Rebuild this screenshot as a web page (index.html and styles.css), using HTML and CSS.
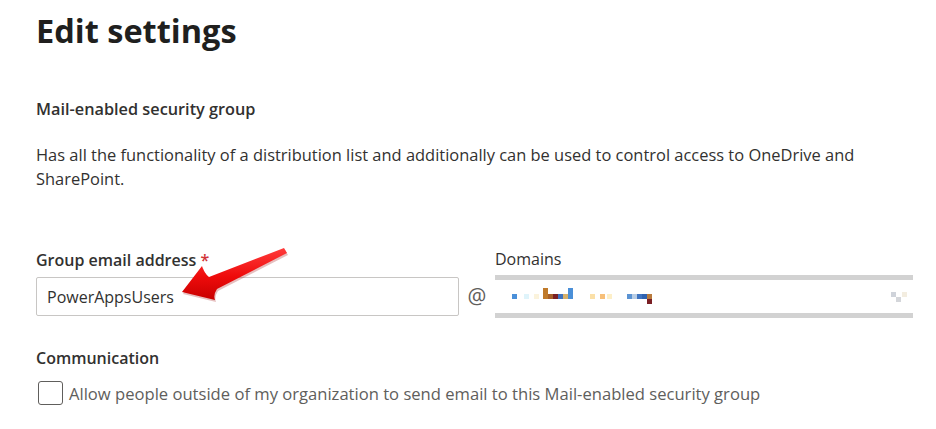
FILE: index.html
```html
<!DOCTYPE html>
<html>
  <head>
    <meta charset="UTF-8">
    <title>Edit settings</title>
    <link rel="stylesheet" href="styles.css">
  </head>
  <body>
    <main class="settings">
      <h1 class="settings__title">Edit settings</h1>

      <section class="settings__type">
        <h2 class="settings__type-name">Mail-enabled security group</h2>
        <p class="settings__type-desc">Has all the functionality of a distribution list and additionally can be used to control access to OneDrive and SharePoint.</p>
      </section>

      <section class="address">
        <div class="address__field">
          <label class="field-label">Group email address <span class="field-label__req">*</span></label>
          <input class="address__input" type="text" value="PowerAppsUsers">
        </div>
        <span class="address__at">@</span>
        <div class="address__domain">
          <label class="field-label field-label--plain">Domains</label>
          <div class="domain-select">
            <svg class="domain-select__blur" width="150" height="18" viewBox="0 0 150 18">
              <rect x="0" y="6" width="5" height="5" fill="#4a90d9"/>
              <rect x="12" y="6" width="5" height="5" fill="#dff4fb"/>
              <rect x="22" y="6" width="5" height="5" fill="#fbf3dc"/>
              <rect x="31" y="0" width="5" height="11" fill="#c07a2a"/>
              <rect x="36" y="6" width="5" height="5" fill="#a8602a"/>
              <rect x="41" y="6" width="5" height="5" fill="#7a1f24"/>
              <rect x="46" y="6" width="5" height="5" fill="#3d73c0"/>
              <rect x="51" y="6" width="5" height="5" fill="#d6b06a"/>
              <rect x="56" y="0" width="5" height="11" fill="#4a8fd8"/>
              <rect x="78" y="6" width="5" height="5" fill="#fbe0a8"/>
              <rect x="88" y="6" width="5" height="5" fill="#f7bf78"/>
              <rect x="95" y="6" width="5" height="5" fill="#fdefc8"/>
              <rect x="115" y="6" width="5" height="5" fill="#5b93d3"/>
              <rect x="120" y="6" width="5" height="5" fill="#b9cde4"/>
              <rect x="125" y="6" width="5" height="5" fill="#3f74c1"/>
              <rect x="130" y="6" width="5" height="5" fill="#2f63b0"/>
              <rect x="135" y="6" width="5" height="5" fill="#b87a3c"/>
              <rect x="135" y="11" width="5" height="5" fill="#7a1f24"/>
            </svg>
            <svg class="domain-select__chevron" width="16" height="10" viewBox="0 0 16 10">
              <rect x="0" y="0" width="5" height="5" fill="#cfd3da"/>
              <rect x="11" y="0" width="5" height="5" fill="#f3ede0"/>
              <rect x="5" y="5" width="5" height="5" fill="#d4d6da"/>
            </svg>
          </div>
        </div>
      </section>

      <section class="communication">
        <h3 class="communication__title">Communication</h3>
        <label class="check">
          <span class="check__box"></span>
          <span class="check__text">Allow people outside of my organization to send email to this Mail-enabled security group</span>
        </label>
      </section>
    </main>

    <svg class="pointer" width="936" height="429" viewBox="0 0 936 429">
      <defs>
        <linearGradient id="arrowFill" x1="0" y1="0" x2="0" y2="1">
          <stop offset="0" stop-color="#ff3b3b"/>
          <stop offset="0.55" stop-color="#ee0b0b"/>
          <stop offset="1" stop-color="#c80000"/>
        </linearGradient>
      </defs>
      <path d="M182 292 L202 266 Q204 273 209 277 L284 248 L287 253 L217 289 Q213 295 215 300 Z" fill="#9a0000" opacity="0.25" transform="translate(1 2)"/>
      <path d="M182 292 L202 266 Q204 273 209 277 L284 248 L287 253 L217 289 Q213 295 215 300 Z" fill="url(#arrowFill)"/>
    </svg>
  </body>
</html>
```

FILE: styles.css
```css
* {
  box-sizing: border-box;
}
body {
  margin: 0;
  background-color: #fff;
  font-family: "Open Sans", "Noto Sans", sans-serif;
  color: #323130;
  position: relative;
}

.settings {
  padding: 10px 0 0 36px;
}
.settings__title {
  font-size: 32.5px;
  font-weight: 700;
  color: #201f1e;
  margin: 0;
  line-height: 42px;
}

.settings__type {
  margin-top: 46px;
}
.settings__type-name {
  font-size: 16.3px;
  font-weight: 600;
  margin: 0;
  line-height: 22px;
}
.settings__type-desc {
  font-size: 16.45px;
  line-height: 24px;
  margin: 23px 0 0;
  max-width: 850px;
}

.address {
  display: flex;
  align-items: flex-end;
  margin-top: 57px;
}
.address__field {
  width: 423px;
}
.field-label {
  display: block;
  font-size: 16px;
  font-weight: 600;
  line-height: 22px;
  margin-bottom: 6px;
}
.field-label--plain {
  font-weight: 400;
  margin-bottom: 5px;
}
.field-label__req {
  color: #d13438;
}
.address__input {
  width: 100%;
  height: 39px;
  border: solid 1px #c8c6c4;
  border-radius: 2px;
  padding: 0 10px;
  font-family: inherit;
  font-size: 16px;
  color: #323130;
  outline: none;
}
.address__at {
  width: 36px;
  text-align: center;
  font-size: 21px;
  line-height: 39px;
  color: #605e5c;
}
.address__domain {
  width: 418px;
  margin-bottom: -2px;
}
.domain-select {
  height: 43px;
  border-top: solid 5px #d2d2d2;
  border-bottom: solid 5px #d2d2d2;
  display: flex;
  align-items: center;
  justify-content: space-between;
  padding: 0 6px 0 17px;
}

.communication {
  margin-top: 31px;
}
.communication__title {
  font-size: 16px;
  font-weight: 600;
  margin: 0;
  line-height: 22px;
}
.check {
  display: flex;
  align-items: center;
  margin-top: 12px;
}
.check__box {
  width: 25px;
  height: 24px;
  border: solid 1px #605e5c;
  border-radius: 3px;
  margin: 0 6px 0 2px;
}
.check__text {
  font-size: 16.6px;
  color: #605e5c;
}

.pointer {
  position: absolute;
  top: 0;
  left: 0;
  pointer-events: none;
}
```
